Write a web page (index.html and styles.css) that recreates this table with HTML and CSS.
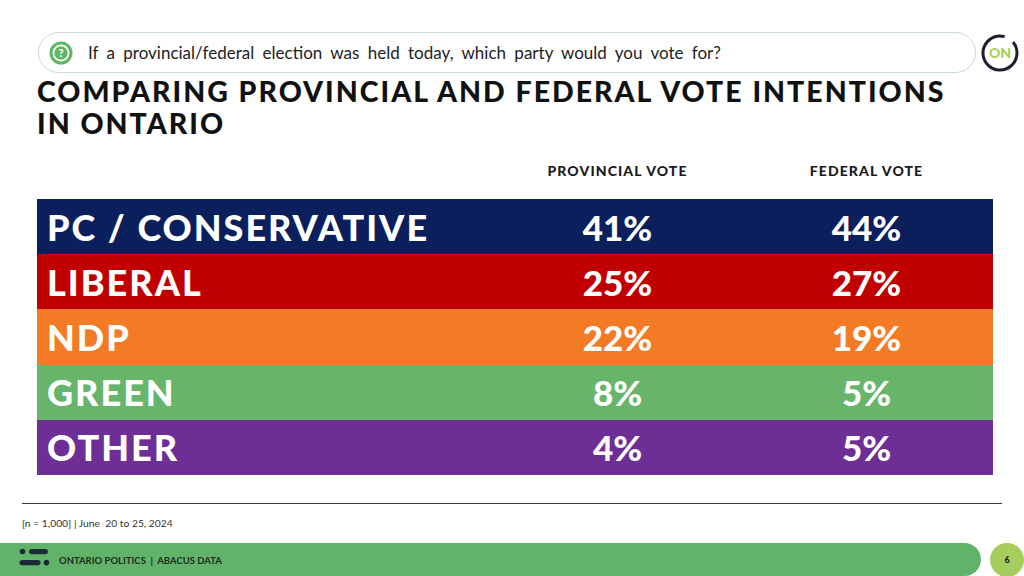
FILE: index.html
```html
<!DOCTYPE html>
<html lang="en">
<head>
<meta charset="utf-8">
<title>Comparing provincial and federal vote intentions in Ontario</title>
<link rel="stylesheet" href="styles.css">
</head>
<body>
<div class="slide">
  <header class="top">
    <div class="question">
      <svg class="q-icon" width="24" height="24" viewBox="0 0 24 24" aria-hidden="true">
        <circle cx="12" cy="12" r="11.5" fill="#5fb764"/>
        <circle cx="12" cy="12" r="7.6" fill="none" stroke="#ffffff" stroke-width="1.8"/>
        <text x="12" y="16.2" text-anchor="middle" font-family="Lato, sans-serif" font-weight="900" font-size="11" fill="#ffffff">?</text>
      </svg>
      <span class="q-text">If a provincial/federal election was held today, which party would you vote for?</span>
    </div>
    <svg class="on-logo" width="40" height="40" viewBox="0 0 40 40" aria-hidden="true">
      <circle cx="20" cy="20" r="17" fill="none" stroke="#1d1f30" stroke-width="3" stroke-dasharray="96 11" transform="rotate(-40 20 20)"/>
      <text x="20" y="25" text-anchor="middle" font-family="Lato, sans-serif" font-weight="900" font-size="14" fill="#a9cf58">ON</text>
    </svg>
  </header>

  <h1 class="title">COMPARING PROVINCIAL AND FEDERAL VOTE INTENTIONS<br>IN ONTARIO</h1>

  <div class="table">
    <div class="head">
      <div></div>
      <div class="col-h">PROVINCIAL VOTE</div>
      <div class="col-h">FEDERAL VOTE</div>
    </div>
    <div class="row pc">
      <div class="label">PC / CONSERVATIVE</div><div class="val">41%</div><div class="val">44%</div>
    </div>
    <div class="row lib">
      <div class="label">LIBERAL</div><div class="val">25%</div><div class="val">27%</div>
    </div>
    <div class="row ndp">
      <div class="label">NDP</div><div class="val">22%</div><div class="val">19%</div>
    </div>
    <div class="row grn">
      <div class="label">GREEN</div><div class="val">8%</div><div class="val">5%</div>
    </div>
    <div class="row oth">
      <div class="label">OTHER</div><div class="val">4%</div><div class="val">5%</div>
    </div>
  </div>

  <div class="rule"></div>
  <p class="note">[n = 1,000] | June&nbsp; 20 to 25, 2024</p>

  <footer class="foot">
    <div class="foot-bar">
      <svg class="foot-logo" width="34" height="22" viewBox="0 0 34 22" aria-hidden="true">
        <circle cx="5.5" cy="5.5" r="2.8" fill="#1c2a3a"/>
        <rect x="12" y="3" width="19" height="5.2" rx="2.6" fill="#1c2a3a"/>
        <rect x="2.5" y="14" width="21" height="5.2" rx="2.6" fill="#1c2a3a"/>
        <circle cx="29.5" cy="16.6" r="2.8" fill="#1c2a3a"/>
      </svg>
      <span class="foot-text">ONTARIO POLITICS&nbsp; |&nbsp; ABACUS DATA</span>
    </div>
    <div class="page-no">6</div>
  </footer>
</div>
</body>
</html>
```

FILE: styles.css
```css
* { box-sizing: border-box; }

html, body {
  margin: 0;
  padding: 0;
  background: #ffffff;
}

body {
  width: 1024px;
  height: 576px;
  overflow: hidden;
  font-family: Lato, "Open Sans", sans-serif;
  color: #111111;
}

.slide {
  width: 1024px;
  height: 576px;
  display: flex;
  flex-direction: column;
}

.top {
  display: flex;
  align-items: center;
  padding: 32px 0 0 38px;
}

.question {
  width: 938px;
  height: 41px;
  border: 1.5px solid #c9ddc9;
  border-radius: 21px;
  display: flex;
  align-items: center;
  padding-left: 10px;
  gap: 15px;
}

.q-icon { flex: none; }

.q-text {
  font-size: 17px;
  color: #222222;
  word-spacing: 4px;
}

.on-logo {
  flex: none;
  margin-left: 4px;
}

.title {
  margin: 2px 0 0 37px;
  font-size: 28.5px;
  line-height: 32px;
  font-weight: 900;
  letter-spacing: 2px;
  color: #111111;
}

.table {
  margin-left: 37px;
  width: 956px;
}

.head,
.row {
  display: grid;
  grid-template-columns: 458px 245px 253px;
}

.head {
  height: 60px;
  padding-top: 22px;
}

.col-h {
  text-align: center;
  font-size: 14px;
  line-height: 20px;
  font-weight: 900;
  letter-spacing: 1.1px;
  color: #1a1a1a;
}

.row {
  height: 55.2px;
  align-items: center;
  color: #ffffff;
}

.label {
  padding-left: 10px;
  font-size: 36px;
  font-weight: 900;
  letter-spacing: 2px;
}

.val {
  text-align: center;
  font-size: 35px;
  font-weight: 900;
}

.pc  { background: #0b1f5c; }
.lib { background: #c00000; }
.ndp { background: #f47b26; }
.grn { background: #67b56a; }
.oth { background: #6d2e96; }

.rule {
  margin: 28px 0 0 22px;
  width: 980px;
  height: 1px;
  background: #3a3a3a;
}

.note {
  margin: 12px 0 0 22px;
  font-size: 10.3px;
  line-height: 14px;
  color: #333333;
}

.foot {
  margin-top: auto;
  height: 33px;
  display: flex;
  align-items: center;
}

.foot-bar {
  width: 982px;
  height: 33px;
  background: #62b36a;
  border-radius: 0 17px 17px 0;
  display: flex;
  align-items: center;
  padding-left: 17px;
  gap: 8px;
}

.foot-logo {
  flex: none;
  margin-top: -5px;
}

.foot-text {
  font-size: 9.5px;
  font-weight: 700;
  color: #1d2e20;
  margin-top: 2px;
}

.page-no {
  margin-left: 9px;
  width: 34px;
  height: 34px;
  flex: none;
  border-radius: 50%;
  background: #a6cd5e;
  display: flex;
  align-items: center;
  justify-content: center;
  font-size: 9px;
  font-weight: 900;
  color: #222222;
}
```
